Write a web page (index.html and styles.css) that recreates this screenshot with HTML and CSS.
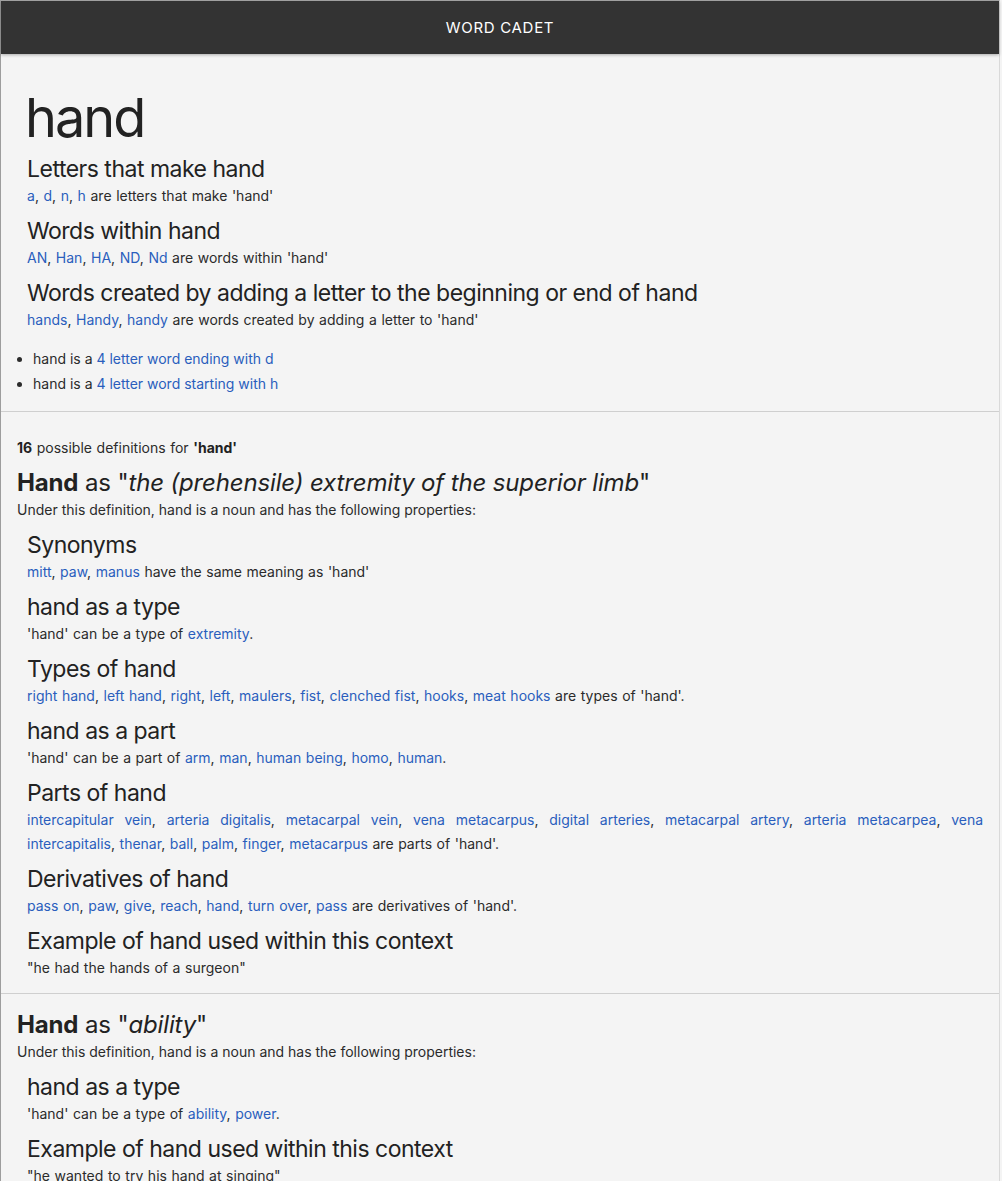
FILE: index.html
```html
<!DOCTYPE html>
<html lang="en">
<head>
<meta charset="utf-8">
<title>Word Cadet - hand</title>
<link rel="stylesheet" href="styles.css">
</head>
<body>
<div class="frame">
  <header class="navbar">WORD CADET</header>
  <main>
    <section class="intro">
      <h1 class="word">hand</h1>
      <div class="group">
        <h3>Letters that make hand</h3>
        <p><a href="#">a</a>, <a href="#">d</a>, <a href="#">n</a>, <a href="#">h</a> are letters that make 'hand'</p>
      </div>
      <div class="group">
        <h3>Words within hand</h3>
        <p><a href="#">AN</a>, <a href="#">Han</a>, <a href="#">HA</a>, <a href="#">ND</a>, <a href="#">Nd</a> are words within 'hand'</p>
      </div>
      <div class="group">
        <h3>Words created by adding a letter to the beginning or end of hand</h3>
        <p><a href="#">hands</a>, <a href="#">Handy</a>, <a href="#">handy</a> are words created by adding a letter to 'hand'</p>
      </div>
      <ul class="facts">
        <li>hand is a <a href="#">4 letter word ending with d</a></li>
        <li>hand is a <a href="#">4 letter word starting with h</a></li>
      </ul>
    </section>

    <section class="definitions">
      <p class="count"><b>16</b> possible definitions for <b>'hand'</b></p>

      <article class="definition">
        <h2><b>Hand</b> as "<i>the (prehensile) extremity of the superior limb</i>"</h2>
        <p class="under">Under this definition, hand is a noun and has the following properties:</p>
        <div class="group">
          <h3>Synonyms</h3>
          <p><a href="#">mitt</a>, <a href="#">paw</a>, <a href="#">manus</a> have the same meaning as 'hand'</p>
        </div>
        <div class="group">
          <h3>hand as a type</h3>
          <p>'hand' can be a type of <a href="#">extremity</a>.</p>
        </div>
        <div class="group">
          <h3>Types of hand</h3>
          <p><a href="#">right hand</a>, <a href="#">left hand</a>, <a href="#">right</a>, <a href="#">left</a>, <a href="#">maulers</a>, <a href="#">fist</a>, <a href="#">clenched fist</a>, <a href="#">hooks</a>, <a href="#">meat hooks</a> are types of 'hand'.</p>
        </div>
        <div class="group">
          <h3>hand as a part</h3>
          <p>'hand' can be a part of <a href="#">arm</a>, <a href="#">man</a>, <a href="#">human being</a>, <a href="#">homo</a>, <a href="#">human</a>.</p>
        </div>
        <div class="group">
          <h3>Parts of hand</h3>
          <p><a href="#">intercapitular vein</a>, <a href="#">arteria digitalis</a>, <a href="#">metacarpal vein</a>, <a href="#">vena metacarpus</a>, <a href="#">digital arteries</a>, <a href="#">metacarpal artery</a>, <a href="#">arteria metacarpea</a>, <a href="#">vena intercapitalis</a>, <a href="#">thenar</a>, <a href="#">ball</a>, <a href="#">palm</a>, <a href="#">finger</a>, <a href="#">metacarpus</a> are parts of 'hand'.</p>
        </div>
        <div class="group">
          <h3>Derivatives of hand</h3>
          <p><a href="#">pass on</a>, <a href="#">paw</a>, <a href="#">give</a>, <a href="#">reach</a>, <a href="#">hand</a>, <a href="#">turn over</a>, <a href="#">pass</a> are derivatives of 'hand'.</p>
        </div>
        <div class="group">
          <h3>Example of hand used within this context</h3>
          <p>"he had the hands of a surgeon"</p>
        </div>
      </article>

      <article class="definition">
        <h2><b>Hand</b> as "<i>ability</i>"</h2>
        <p class="under">Under this definition, hand is a noun and has the following properties:</p>
        <div class="group">
          <h3>hand as a type</h3>
          <p>'hand' can be a type of <a href="#">ability</a>, <a href="#">power</a>.</p>
        </div>
        <div class="group">
          <h3>Example of hand used within this context</h3>
          <p>"he wanted to try his hand at singing"</p>
        </div>
      </article>
    </section>
  </main>
</div>
</body>
</html>
```

FILE: styles.css
```css
html, body {
  margin: 0;
  padding: 0;
  background: #f4f4f4;
}

body {
  font-family: Inter, "Noto Sans", sans-serif;
  color: #2b2b2b;
  font-size: 14px;
  line-height: 24px;
}

.frame {
  width: 998px;
  min-height: 1181px;
  border-left: 1px solid #9d9d9d;
  border-top: 1px solid #a9a9a9;
  border-right: 1px solid #d9d9d9;
  box-sizing: content-box;
}

.navbar {
  height: 53px;
  background: #333;
  color: #fff;
  font-size: 15px;
  letter-spacing: 0.7px;
  display: flex;
  align-items: center;
  justify-content: center;
  box-shadow: 0 1px 3px rgba(0, 0, 0, 0.3);
  position: relative;
}

a {
  color: #2a5ebd;
  text-decoration: none;
}

p {
  margin: 0;
  text-align: justify;
  word-spacing: 0.65px;
}

.under {
  word-spacing: 0;
}

h1, h2, h3 {
  margin: 0;
  font-weight: normal;
  color: #222;
}

.intro {
  padding: 32px 16px 15px;
}

.word {
  font-size: 54px;
  line-height: 64px;
  padding-left: 8px;
  letter-spacing: -2px;
  margin-bottom: -4px;
}

.group {
  padding-left: 10px;
  margin-top: 10px;
}

h3 {
  font-size: 23px;
  line-height: 26px;
  padding-bottom: 2px;
  letter-spacing: -0.5px;
}

.facts {
  margin: 14px 0 0;
  padding-left: 16px;
}

.facts li {
  line-height: 25px;
}

.definitions {
  border-top: 1px solid #cfcfcf;
  padding-top: 24px;
}

.count {
  padding: 0 16px;
  margin-bottom: 10px;
}

.count b {
  color: #222;
}

.definition {
  padding: 0 16px 13px;
}

.definition + .definition {
  border-top: 1px solid #cfcfcf;
  padding-top: 18px;
}

h2 {
  font-size: 24px;
  line-height: 26px;
  padding-bottom: 2px;
  letter-spacing: -0.15px;
}

h2 b {
  font-weight: bold;
}
```
